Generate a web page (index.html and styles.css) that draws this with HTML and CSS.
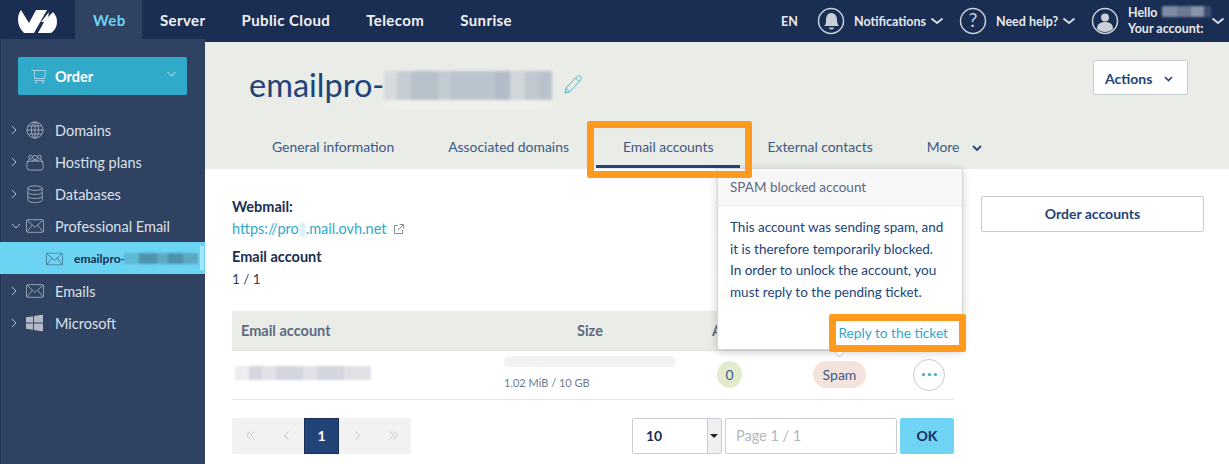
FILE: index.html
```html
<!DOCTYPE html>
<html lang="en">
<head>
    <meta charset="UTF-8">
    <meta name="viewport" content="width=device-width, initial-scale=1.0">
    <title>Email accounts</title>
    <link rel="stylesheet" href="styles.css">
</head>
<body>
    <header class="topbar">
        <div class="logo">
            <svg width="40" height="24" viewBox="0 0 40 24"><path fill="#fff" d="M3 0 L11 13 L18 0 L29 0 L16 23 L6 23 Q0 17 0 10 Q0 4 3 0Z"/><path fill="#fff" d="M35 2 Q39 6 39 12 Q39 19 33 23 L20 23 L26 12 L23 12 L31 2 L30 7 Z"/></svg>
        </div>
        <nav class="universes">
            <a class="universe active">Web</a>
            <a class="universe">Server</a>
            <a class="universe">Public Cloud</a>
            <a class="universe">Telecom</a>
            <a class="universe">Sunrise</a>
        </nav>
        <div class="usermenu">
            <span class="lang">EN</span>
            <span class="menu-item notif">
                <svg class="round-icon" width="28" height="28" viewBox="0 0 28 28"><circle cx="14" cy="14" r="12.5" fill="none" stroke="#c9ced8" stroke-width="1.5"/><path fill="#c9ced8" d="M14 6c4 0 6 3 6 7 0 3 1 5 2 6H7c2-1 2-3 2-6 0-4 2-7 5-7z"/><path fill="#c9ced8" d="M12 20.5h5a2.5 2 0 0 1-5 0z"/></svg>
                <span class="item-label">Notifications</span>
                <svg class="chev" width="14" height="8" viewBox="0 0 14 8"><path d="M1.5 1.500 7 6l5.500-4.500" fill="none" stroke="#d5d9e0" stroke-width="2"/></svg>
            </span>
            <span class="menu-item help">
                <svg class="round-icon" width="28" height="28" viewBox="0 0 28 28"><circle cx="14" cy="14" r="12.5" fill="none" stroke="#c9ced8" stroke-width="1.5"/><text x="14" y="20" text-anchor="middle" class="q-mark">?</text></svg>
                <span class="item-label">Need help?</span>
                <svg class="chev" width="14" height="8" viewBox="0 0 14 8"><path d="M1.5 1.500 7 6l5.500-4.500" fill="none" stroke="#d5d9e0" stroke-width="2"/></svg>
            </span>
            <span class="menu-item account">
                <svg class="round-icon" width="28" height="28" viewBox="0 0 28 28"><circle cx="14" cy="14" r="12.5" fill="none" stroke="#c9ced8" stroke-width="1.5"/><circle cx="14" cy="10.5" r="4" fill="#c9ced8"/><path fill="#c9ced8" d="M6 22c0-5 3-7 8-7s8 2 8 7c-2 2-5 3-8 3s-6-1-8-3z"/></svg>
                <span class="hello"><span class="hello-line">Hello <i class="blur blur-name"></i></span><span>Your account:</span></span>
                <svg class="chev" width="14" height="8" viewBox="0 0 14 8"><path d="M1.5 1.500 7 6l5.500-4.500" fill="none" stroke="#d5d9e0" stroke-width="2"/></svg>
            </span>
        </div>
    </header>

    <div class="page">
        <aside class="sidebar">
            <button class="order">
                <svg width="16" height="15" viewBox="0 0 16 15"><path d="M.5 1.500h14l-1 8H3.500V2M3.500 11.500h10" fill="none" stroke="#9fd6e6" stroke-width="1"/><circle cx="5" cy="13.500" r="1" fill="#9fd6e6"/><circle cx="12" cy="13.500" r="1" fill="#9fd6e6"/></svg>
                <span class="order-label">Order</span>
                <svg class="order-chev" width="9" height="6" viewBox="0 0 9 6"><path d="M.5 1 4.500 5l4-4" fill="none" stroke="#c6e8f1" stroke-width="1"/></svg>
            </button>
            <ul class="tree">
                <li class="tree-item">
                    <svg class="arrow" width="6" height="10" viewBox="0 0 6 10"><path d="M1 1l4 4-4 4" fill="none" stroke="#b6bdca"/></svg>
                    <svg class="tree-icon" width="18" height="18" viewBox="0 0 20 20" fill="none" stroke="#a3acbb"><circle cx="10" cy="10" r="9"/><ellipse cx="10" cy="10" rx="4" ry="9"/><path d="M10 1v18M1 10h18M2.500 5.500h15M2.500 14.500h15"/></svg>
                    Domains
                </li>
                <li class="tree-item">
                    <svg class="arrow" width="6" height="10" viewBox="0 0 6 10"><path d="M1 1l4 4-4 4" fill="none" stroke="#b6bdca"/></svg>
                    <svg class="tree-icon" width="18" height="18" viewBox="0 0 20 20" fill="none" stroke="#a3acbb"><rect x="1" y="9" width="18" height="10" rx="3"/><circle cx="5" cy="4.500" r="2"/><circle cx="15" cy="4.500" r="2"/><circle cx="10" cy="5" r="2.500"/><path d="M1.500 10c0-1.500 1.500-3 3-3M18.500 10c0-1.500-1.500-3-3-3M6.500 10c0-1.500 1-2 3.500-2s3.500.5 3.500 2"/></svg>
                    Hosting plans
                </li>
                <li class="tree-item">
                    <svg class="arrow" width="6" height="10" viewBox="0 0 6 10"><path d="M1 1l4 4-4 4" fill="none" stroke="#b6bdca"/></svg>
                    <svg class="tree-icon" width="18" height="18" viewBox="0 0 20 20" fill="none" stroke="#a3acbb"><ellipse cx="10" cy="3.500" rx="8" ry="2.500"/><path d="M2 3.500v13C2 18 5.500 19.500 10 19.500s8-1.500 8-3v-13M2 8c0 1.500 3.500 2.500 8 2.500S18 9.500 18 8M2 12.500c0 1.500 3.500 2.500 8 2.500s8-1 8-2.500"/></svg>
                    Databases
                </li>
                <li class="tree-item">
                    <svg class="arrow" width="10" height="6" viewBox="0 0 10 6"><path d="M1 1l4 4 4-4" fill="none" stroke="#b6bdca"/></svg>
                    <svg class="tree-icon" width="18" height="14" viewBox="0 0 20 15" fill="none" stroke="#a3acbb"><rect x=".5" y=".5" width="19" height="14" rx="1.500"/><path d="M1 1l9 8 9-8M1 14l6-7.500M19 14l-6-7.500"/></svg>
                    Professional Email
                </li>
                <li class="tree-sub">
                    <svg class="tree-icon" width="17" height="13" viewBox="0 0 20 15" fill="none" stroke="#3f6f8c"><rect x=".5" y=".5" width="19" height="14" rx="1.500"/><path d="M1 1l9 8 9-8M1 14l6-7.500M19 14l-6-7.500"/></svg>
                    <span class="sub-label">emailpro-</span><i class="blur blur-sub"></i>
                    <i class="sub-edge"></i>
                </li>
                <li class="tree-item">
                    <svg class="arrow" width="6" height="10" viewBox="0 0 6 10"><path d="M1 1l4 4-4 4" fill="none" stroke="#b6bdca"/></svg>
                    <svg class="tree-icon" width="18" height="14" viewBox="0 0 20 15" fill="none" stroke="#a3acbb"><rect x=".5" y=".5" width="19" height="14" rx="1.500"/><path d="M1 1l9 8 9-8M1 14l6-7.500M19 14l-6-7.500"/></svg>
                    Emails
                </li>
                <li class="tree-item">
                    <svg class="arrow" width="6" height="10" viewBox="0 0 6 10"><path d="M1 1l4 4-4 4" fill="none" stroke="#b6bdca"/></svg>
                    <svg class="tree-icon" width="17" height="17" viewBox="0 0 18 18" fill="#b4bbc7"><path d="M0 3l7.500-1.200V8.500H0zM8.500 1.600 18 0v8.500H8.500zM0 9.500h7.500v6.700L0 15zM8.500 9.500H18V18l-9.500-1.600z"/></svg>
                    Microsoft
                </li>
            </ul>
        </aside>

        <main class="main">
            <section class="head">
                <div class="title-row">
                    <h1>emailpro-</h1><i class="blur blur-title"></i>
                    <svg class="pencil" width="19" height="20" viewBox="0 0 19 20" fill="none" stroke="#4fb4d0"><path d="M1 19l1-5L13 2.500c1-1 2.500-1 3.500 0s1 2.500 0 3.500L5.500 18zM2 14l3.500 4M11.500 4l4 4"/></svg>
                    <button class="actions">Actions
                        <svg width="9" height="6" viewBox="0 0 9 6"><path d="M1 1l3.500 3.500L8 1" fill="none" stroke="#1f4479" stroke-width="1.600"/></svg>
                    </button>
                </div>
                <nav class="tabs">
                    <a class="tab">General information</a>
                    <a class="tab">Associated domains</a>
                    <a class="tab current">Email accounts</a>
                    <a class="tab">External contacts</a>
                    <a class="tab more">More
                        <svg width="10" height="7" viewBox="0 0 10 7"><path d="M1 1l4 4 4-4" fill="none" stroke="#1f4479" stroke-width="1.800"/></svg>
                    </a>
                </nav>
            </section>

            <section class="content">
                <div class="left">
                    <h4>Webmail:</h4>
                    <p class="webmail"><a>https://pro<i class="blur blur-link"></i>.mail.ovh.net</a>
                        <svg width="10" height="10" viewBox="0 0 10 10" fill="none" stroke="#8a8f96"><path d="M4 1.500H.5v8h8V6M5.500.5h4v4M9.500.5 4 6"/></svg>
                    </p>
                    <h4>Email account</h4>
                    <p class="count">1 / 1</p>

                    <table class="accounts">
                        <thead>
                            <tr><th class="col-name">Email account</th><th class="col-size">Size</th><th class="col-alias">A</th><th class="col-state"></th><th class="col-more"></th></tr>
                        </thead>
                        <tbody>
                            <tr>
                                <td><i class="blur blur-account"></i></td>
                                <td>
                                    <div class="bar"></div>
                                    <div class="quota">1.02 MiB / 10 GB</div>
                                </td>
                                <td><span class="zero">0</span></td>
                                <td><span class="spam">Spam</span></td>
                                <td><span class="dots"><i></i><i></i><i></i></span></td>
                            </tr>
                        </tbody>
                    </table>

                    <div class="pager-row">
                        <div class="pager">
                            <span class="pg"><svg width="9" height="9" viewBox="0 0 9 9"><path d="M4.500.5l-4 4 4 4M8.500.5l-4 4 4 4" fill="none" stroke="#c3c6ca"/></svg></span>
                            <span class="pg"><svg width="5" height="9" viewBox="0 0 5 9"><path d="M4.500.5l-4 4 4 4" fill="none" stroke="#c3c6ca"/></svg></span>
                            <span class="pg on">1</span>
                            <span class="pg"><svg width="5" height="9" viewBox="0 0 5 9"><path d="M.5.5l4 4-4 4" fill="none" stroke="#c3c6ca"/></svg></span>
                            <span class="pg"><svg width="9" height="9" viewBox="0 0 9 9"><path d="M.5.5l4 4-4 4M4.500.5l4 4-4 4" fill="none" stroke="#c3c6ca"/></svg></span>
                        </div>
                        <div class="goto">
                            <span class="select"><span class="select-val">10</span><span class="select-btn"></span></span>
                            <span class="page-input">Page 1 / 1</span>
                            <button class="ok">OK</button>
                        </div>
                    </div>
                </div>
                <div class="right">
                    <button class="order-accounts">Order accounts</button>
                </div>
            </section>
        </main>
    </div>

    <div class="popover">
        <div class="pop-head">SPAM blocked account</div>
        <div class="pop-body">This account was sending spam, and<br>it is therefore temporarily blocked.<br>In order to unlock the account, you<br>must reply to the pending ticket.</div>
        <a class="pop-link">Reply to the ticket</a>
        <i class="pop-arrow"></i>
    </div>
    <i class="mark mark-tab"></i>
    <i class="mark mark-link"></i>
</body>
</html>
```

FILE: styles.css
```css
* {
    box-sizing: border-box;
}
html, body {
    height: 464px;
    overflow: hidden;
}
body {
    margin: 0;
    font-family: Lato, "Open Sans", sans-serif;
    font-size: 14.5px;
    color: #1a2d52;
    background: #fff;
    position: relative;
}
button {
    font-family: inherit;
}
.blur {
    display: inline-block;
    filter: blur(1px);
}

/* top bar */
.topbar {
    display: flex;
    align-items: flex-start;
    height: 42px;
    background: #1a2d52;
    color: #fff;
}
.logo {
    width: 75px;
    height: 42px;
    padding: 10px 0 0 18px;
}
.universes {
    display: flex;
}
.universe {
    height: 39px;
    line-height: 41px;
    font-weight: 700;
    font-size: 15px;
    letter-spacing: 0.4px;
    padding: 0 18px;
    color: #f0f2f5;
    position: relative;
    z-index: 2;
}
.universe.active {
    width: 67px;
    background: #2f4262;
    color: #6fd3f4;
}
.usermenu {
    margin-left: auto;
    display: flex;
    align-items: center;
    height: 42px;
    font-size: 12.5px;
    font-weight: 700;
    color: #e6e9ee;
}
.lang {
    width: 36px;
}
.menu-item {
    display: flex;
    align-items: center;
}
.item-label {
    margin: 0 4px 0 9px;
}
.notif {
    width: 142px;
}
.help {
    width: 132px;
}
.account {
    width: 138px;
}
.q-mark {
    font-size: 20px;
    fill: #c9ced8;
    font-weight: 400;
}
.hello {
    display: flex;
    flex-direction: column;
    line-height: 16px;
    margin-left: 9px;
    width: 83px;
}
.hello-line {
    display: flex;
    gap: 4px;
}
.blur-name {
    width: 50px;
    height: 11px;
    margin-top: 1px;
    background: linear-gradient(90deg, #7f8ba3 0 30%, #6c7a95 30% 60%, #8793a9 60% 85%, #3c4d70 85%);
}

/* sidebar */
.page {
    display: flex;
    height: 422px;
}
.sidebar {
    width: 205px;
    flex: none;
    margin-top: -3px;
    height: 425px;
    background: #2f4262;
    border-left: 1px solid #22355a;
    position: relative;
    padding-top: 18px;
}
.order {
    display: flex;
    align-items: center;
    width: 169px;
    height: 38px;
    margin-left: 17px;
    padding: 0 11px 0 13px;
    border: none;
    border-radius: 2px;
    background: #31a9c9;
    color: #fff;
    font-size: 14.5px;
    font-weight: 700;
}
.order-label {
    margin-left: 8px;
}
.order-chev {
    margin: -4px 0 0 auto;
}
.tree {
    list-style: none;
    margin: 19px 0 0;
    padding: 0;
}
.tree-item {
    display: flex;
    align-items: center;
    height: 32px;
    color: #dde1e8;
    font-size: 14.5px;
    position: relative;
    padding-left: 54px;
}
.arrow {
    position: absolute;
    left: 10px;
    top: 50%;
    transform: translateY(-50%);
}
.tree-icon {
    position: absolute;
    left: 25px;
    top: 50%;
    transform: translateY(-50%);
}
.tree-sub {
    position: relative;
    display: flex;
    align-items: center;
    height: 32px;
    margin: 0 0 1px -1px;
    background: #6bd4f3;
    padding-left: 74px;
    font-size: 12px;
    font-weight: 700;
    color: #1a2d52;
    width: 205px;
}
.tree-sub .tree-icon {
    left: 46px;
    top: 52%;
}
.blur-sub {
    width: 74px;
    height: 11px;
    margin-left: -1px;
    background: linear-gradient(90deg, #5fb8d4 0 20%, #4f94ae 20% 45%, #5ea9c4 45% 60%, #4d92ac 60% 80%, #5ba8c2 80%);
}
.sub-edge {
    width: 4px;
    height: 24px;
    background: #a6e6f8;
    margin-left: 2px;
}

/* head */
.main {
    flex: 1;
    min-width: 0;
}
.head {
    height: 127px;
    background: #eaece8;
    padding: 0 41px 0 44px;
}
.title-row {
    display: flex;
    align-items: flex-start;
    height: 87px;
    padding-top: 18px;
}
h1 {
    margin: 0;
    font-size: 32.5px;
    font-weight: 400;
    line-height: 50px;
    color: #214478;
}
.blur-title {
    width: 168px;
    height: 29px;
    margin-top: 11px;
    filter: blur(1.5px);
    box-shadow: 0 12px 5px -3px #f0f1ed;
    background: linear-gradient(90deg, #d6dadc 0 8%, #c5ced4 8% 16%, #b6c1ca 16% 32%, #c3ccd2 32% 40%, #bac4cc 40% 66%, #b2bcc6 66% 75%, #d0d6d9 75% 84%, #c0c9cf 84% 92%, #b9c3cb 92%);
}
.pencil {
    margin: 14px 0 0 12px;
}
.actions {
    margin-left: auto;
    width: 95px;
    height: 35px;
    background: #fff;
    border: 1px solid #c8ccd2;
    border-radius: 2px;
    color: #214478;
    font-weight: 700;
    font-size: 14px;
    display: flex;
    align-items: center;
    justify-content: space-between;
    padding: 2px 14px 0 11px;
}
.tabs {
    display: flex;
    padding-left: 23px;
    height: 40px;
}
.tab {
    font-size: 13.9px;
    color: #3a5986;
    line-height: 35px;
    margin-right: 54px;
}
.tab.current {
    margin: 0 27px 0 -27px;
    padding: 0 27px;
    border-bottom: 3px solid #214478;
    height: 39px;
}
.tab.more {
    margin: 0;
}
.tab.more svg {
    margin-left: 9px;
}

/* content */
.content {
    display: flex;
    padding: 0 25px 0 27px;
}
.left {
    width: 722px;
}
.right {
    margin-left: 27px;
    padding-top: 27px;
}
.order-accounts {
    width: 223px;
    height: 36px;
    padding-bottom: 3px;
    background: #fff;
    border: 1px solid #c8ccd2;
    border-radius: 2px;
    color: #214478;
    font-weight: 700;
    font-size: 14px;
}
h4 {
    margin: 0;
    font-size: 14.5px;
    font-weight: 700;
    color: #1a2d52;
    line-height: 20px;
}
h4:first-child {
    margin-top: 28px;
}
.webmail {
    margin: 2px 0 8px;
    line-height: 20px;
    font-size: 14.5px;
    display: flex;
    align-items: center;
    gap: 7px;
}
.webmail a {
    color: #31a9c9;
}
.blur-link {
    width: 7px;
    height: 14px;
    background: #dcf1f7;
    vertical-align: -3px;
}
.count {
    margin: 2px 0 0;
    line-height: 20px;
    font-size: 13.5px;
    color: #333f55;
}
.accounts {
    width: 100%;
    margin-top: 22px;
    border-collapse: collapse;
    table-layout: fixed;
}
.accounts th {
    height: 39px;
    background: #eaece8;
    border-bottom: 1px solid #dfe1de;
    color: #5c6a82;
    font-size: 14.5px;
    font-weight: 700;
    text-align: left;
    padding: 0;
}
.accounts td {
    height: 49px;
    border-bottom: 1px solid #e8e9e7;
    padding: 0;
    vertical-align: middle;
}
.accounts .col-name {
    width: 272px;
    padding-left: 9px;
}
.accounts .col-size {
    width: 208px;
    padding-left: 73px;
}
.col-alias {
    width: 96px;
}
.col-state {
    width: 100px;
}
.blur-account {
    width: 136px;
    height: 14px;
    margin-left: 3px;
    background: linear-gradient(90deg, #eceded 0 10%, #d3d6df 10% 20%, #e0e2e8 20% 30%, #d3d6df 30% 50%, #e0e2e8 50% 60%, #d3d6df 60% 80%, #e0e2e8 80%);
}
.bar {
    width: 172px;
    height: 11px;
    margin-top: -3px;
    background: #f2f2f2;
    border-radius: 6px;
}
.quota {
    margin-top: 9px;
    font-size: 11px;
    line-height: 14px;
    color: #6f7b8f;
}
.zero {
    display: block;
    width: 25px;
    height: 27px;
    margin-left: 5px;
    line-height: 27px;
    text-align: center;
    background: #e3ebcf;
    border-radius: 50%;
    color: #3a5986;
    font-size: 14px;
}
.spam {
    display: block;
    width: 53px;
    height: 27px;
    line-height: 27px;
    margin-left: 5px;
    text-align: center;
    background: #f3e3dd;
    border-radius: 14px;
    color: #3a5986;
    font-size: 14px;
}
.dots {
    display: flex;
    align-items: center;
    justify-content: center;
    gap: 3px;
    width: 32px;
    height: 32px;
    margin-left: 5px;
    border: 1px solid #c8ccd2;
    border-radius: 50%;
}
.dots i {
    width: 3px;
    height: 3px;
    background: #31a9c9;
    border-radius: 50%;
}

/* pager */
.pager-row {
    display: flex;
    justify-content: space-between;
    margin-top: 18px;
}
.pager {
    display: flex;
    height: 36px;
    background: #f2f2f2;
    border-radius: 2px;
}
.pg {
    display: flex;
    align-items: center;
    justify-content: center;
    width: 36px;
}
.pg.on {
    width: 35px;
    background: #214478;
    border: 1px solid #1a2d52;
    color: #fff;
    font-weight: 700;
    font-size: 14px;
}
.goto {
    display: flex;
    gap: 3px;
    height: 36px;
}
.select {
    display: flex;
    width: 90px;
    border: 1px solid #c8ccd2;
    border-radius: 2px;
}
.select-val {
    flex: 1;
    padding-left: 13px;
    line-height: 34px;
    font-weight: 700;
    font-size: 14px;
}
.select-btn {
    width: 14px;
    background: #f0f0f0;
    border-left: 1px solid #c8ccd2;
    position: relative;
}
.select-btn::after {
    content: "";
    position: absolute;
    left: 2px;
    top: 15px;
    border: 4px solid transparent;
    border-top-color: #222;
}
.page-input {
    width: 172px;
    padding-left: 10px;
    border: 1px solid #c8ccd2;
    border-radius: 2px;
    line-height: 34px;
    color: #b4b6b9;
    font-size: 14.5px;
}
.ok {
    width: 54px;
    border: none;
    border-radius: 2px;
    background: #6fd3f4;
    color: #1a2d52;
    font-weight: 700;
    font-size: 14px;
}

/* popover and the orange marks laid over the page */
.popover {
    position: absolute;
    left: 717px;
    top: 168px;
    width: 246px;
    height: 182px;
    background: #fff;
    border: 1px solid #d6d7d6;
    border-radius: 3px;
    box-shadow: 0 2px 8px rgba(0, 0, 0, 0.2);
    z-index: 3;
}
.pop-head {
    height: 37px;
    padding-left: 12px;
    line-height: 37px;
    background: #f7f7f7;
    border-bottom: 1px solid #e8e8e8;
    color: #5c6a82;
    font-size: 13.5px;
}
.pop-body {
    padding: 11px 0 0 12px;
    line-height: 21.5px;
    color: #214478;
    font-size: 13.5px;
}
.pop-link {
    position: absolute;
    right: 14px;
    bottom: 8px;
    color: #31a9c9;
    font-size: 13.7px;
}
.pop-arrow {
    position: absolute;
    left: 116px;
    bottom: -6px;
    width: 11px;
    height: 11px;
    background: #fff;
    border-right: 1px solid #c9c9c9;
    border-bottom: 1px solid #c9c9c9;
    transform: rotate(45deg);
}
.mark {
    position: absolute;
    border: 7px solid #ff9a1f;
    border-radius: 2px;
    z-index: 4;
}
.mark-tab {
    left: 587px;
    top: 121px;
    width: 165px;
    height: 57px;
}
.mark-link {
    left: 829px;
    top: 314px;
    width: 137px;
    height: 38px;
}
```
